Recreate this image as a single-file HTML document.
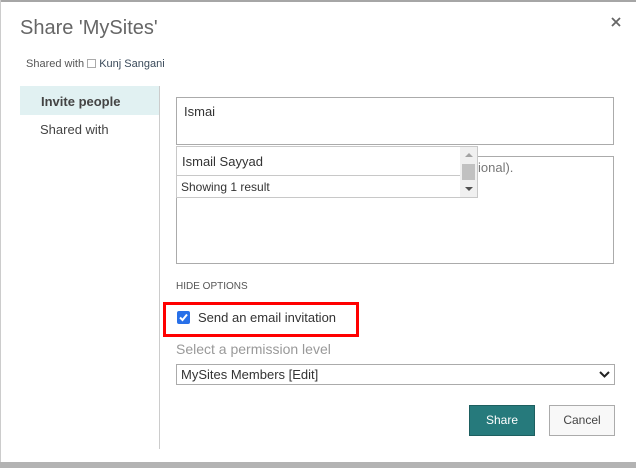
<!DOCTYPE html>
<html><head><style>
*{box-sizing:border-box;margin:0;padding:0}
body{width:636px;height:468px;background:#fff;font-family:"Liberation Sans",sans-serif;position:relative;overflow:hidden;color:#333}
.a{position:absolute}
</style></head><body>
<div class="a" style="left:0;top:0;width:636px;height:2px;background:#a6a6a6"></div>
<div class="a" style="left:0;top:0;width:1px;height:462px;background:#ccc"></div>
<div class="a" style="left:0;top:462px;width:636px;height:6px;background:#b3b3b3"></div>
<div class="a" style="left:20px;top:17px;font-size:20px;color:#666;font-weight:300">Share 'MySites'</div>
<svg class="a" style="left:611px;top:17px" width="10" height="10"><path d="M1 1L9 9M9 1L1 9" stroke="#666" stroke-width="1.8"/></svg>
<div class="a" style="left:26px;top:58px;font-size:11px;color:#555">Shared with <span style="display:inline-block;width:9px;height:9px;border:1px solid #aaa;vertical-align:-1px"></span> <span style="color:#3a4a5a">Kunj Sangani</span></div>
<div class="a" style="left:20px;top:86px;width:139px;height:29px;background:#e1f1f2"></div>
<div class="a" style="left:41px;top:94px;font-size:13px;font-weight:bold;color:#444">Invite people</div>
<div class="a" style="left:40px;top:122px;font-size:13px;color:#444">Shared with</div>
<div class="a" style="left:159px;top:86px;width:1px;height:363px;background:#ccc"></div>
<div class="a" style="left:176px;top:97px;width:438px;height:48px;border:1px solid #ababab"></div>
<div class="a" style="left:184px;top:104px;font-size:13px">Ismai</div>
<div class="a" style="left:176px;top:156px;width:438px;height:108px;border:1px solid #ababab"></div>
<div class="a" style="left:478px;top:160px;font-size:13px;color:#777">ional).</div>
<div class="a" style="left:176px;top:146px;width:302px;height:52px;border:1px solid #c8c8c8;background:#fff"></div>
<div class="a" style="left:177px;top:175px;width:283px;height:1px;background:#c8c8c8"></div>
<div class="a" style="left:182px;top:154px;font-size:13px">Ismail Sayyad</div>
<div class="a" style="left:181px;top:180px;font-size:12px">Showing 1 result</div>
<div class="a" style="left:460px;top:147px;width:17px;height:50px;background:#f0f0f0"></div>
<div class="a" style="left:462px;top:164px;width:13px;height:16px;background:#c1c1c1"></div>
<div class="a" style="left:465px;top:153px;border:4px solid transparent;border-bottom:4px solid #a3a3a3;border-top:0"></div>
<div class="a" style="left:465px;top:187px;border:4px solid transparent;border-top:4px solid #505050;border-bottom:0"></div>
<div class="a" style="left:176px;top:281px;font-size:10px;color:#555">HIDE OPTIONS</div>
<div class="a" style="left:163px;top:302px;width:196px;height:35px;border:3px solid #f00"></div>
<div class="a" style="left:177px;top:311px;width:13px;height:13px;background:#2870e8;border-radius:2px"></div>
<svg class="a" style="left:177px;top:311px" width="13" height="13"><path d="M3 6.5L5.5 9L10 3.5" stroke="#fff" stroke-width="2" fill="none"/></svg>
<div class="a" style="left:198px;top:310px;font-size:13px">Send an email invitation</div>
<div class="a" style="left:176px;top:341px;font-size:14px;color:#999">Select a permission level</div>
<div class="a" style="left:176px;top:364px;width:439px;height:21px;border:1px solid #ababab"></div>
<div class="a" style="left:181px;top:367px;font-size:13px">MySites Members [Edit]</div>
<svg class="a" style="left:599px;top:371px" width="11" height="7"><path d="M1 1L5.5 5.5L10 1" stroke="#222" stroke-width="2" fill="none"/></svg>
<div class="a" style="left:469px;top:405px;width:66px;height:31px;background:#267a7c;border:1px solid #1d5f60;color:#fff;font-size:12px;text-align:center;line-height:29px">Share</div>
<div class="a" style="left:549px;top:405px;width:66px;height:31px;background:#f8f8f8;border:1px solid #ababab;color:#444;font-size:12px;text-align:center;line-height:29px">Cancel</div>
</body></html>
